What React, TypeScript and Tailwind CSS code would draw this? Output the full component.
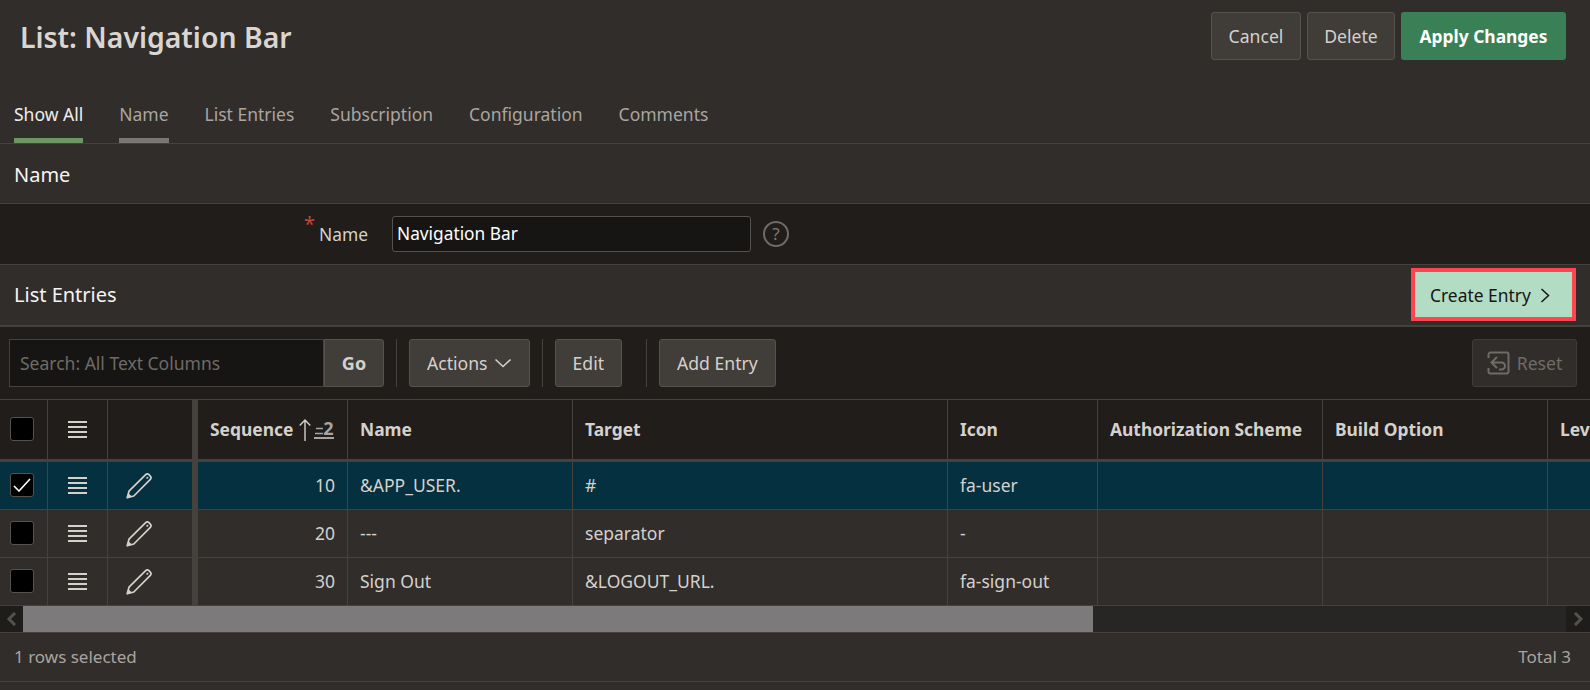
const gridCols = "grid grid-cols-[48px_60px_84px_6px_150px_225px_375px_150px_225px_225px_42px]";

const rows = [
    { seq: "10", name: "&APP_USER.", target: "#", icon: "fa-user", selected: true },
    { seq: "20", name: "---", target: "separator", icon: "-", selected: false },
    { seq: "30", name: "Sign Out", target: "&LOGOUT_URL.", icon: "fa-sign-out", selected: false },
];

function MenuLines() {
    return (
        <svg width="19" height="18" viewBox="0 0 19 18" className="text-[#d4d1cd] mb-[2px]">
            <path d="M0 2h19M0 7h19M0 12h19M0 17h19" stroke="currentColor" strokeWidth="2" fill="none" />
        </svg>
    );
}

function Pencil() {
    return (
        <svg width="26" height="26" viewBox="0 0 26 26" fill="none" className="text-[#d4d1cd]">
            <path d="M1.2 24.8l1.8-6.6L19.4 1.9a2.7 2.7 0 0 1 3.8 0l.9.9a2.7 2.7 0 0 1 0 3.8L7.8 23z" stroke="currentColor" strokeWidth="1.7" strokeLinejoin="round" />
            <path d="M1.2 24.8l1.3-4.6 3.3 3.3z" fill="currentColor" />
            <circle cx="21.3" cy="4.7" r="1" fill="currentColor" />
        </svg>
    );
}

function Check({ checked }: { checked?: boolean }) {
    return (
        <div className="w-6 h-6 mb-[2px] bg-black border border-[#55514d] rounded-[3px] flex items-center justify-center">
            {checked && (
                <svg width="18" height="14" viewBox="0 0 18 14" fill="none">
                    <path d="M1 8l5 5L17 1" stroke="#ffffff" strokeWidth="1.6" />
                </svg>
            )}
        </div>
    );
}

function ToolButton({ label, icon }: { label: string; icon?: boolean }) {
    return (
        <button className="h-12 px-[17px] flex items-center gap-[6px] bg-[#413d39] border border-[#56524e] rounded-[3px] text-[17.6px] text-[#d4d1cd]">
            {label}
            {icon && (
                <svg width="18" height="10" viewBox="0 0 18 10" fill="none">
                    <path d="M1.500 1.500l7.500 7 7.500-7" stroke="currentColor" strokeWidth="1.6" />
                </svg>
            )}
        </button>
    );
}

function Cell({ children, className = "" }: { children?: React.ReactNode; className?: string }) {
    return <div className={`border-r border-[#45413d] flex items-center ${className}`}>{children}</div>;
}

export default function App() {
    return (
        <div className="w-[1590px] h-[690px] overflow-hidden bg-[#312d2a] text-[#d4d1cd] font-['Noto_Sans',sans-serif]">
            {/* Title + tabs */}
            <header className="h-[144px] border-b border-[#45413d] flex flex-col">
                <div className="flex justify-between pt-3 pr-6 pl-5 h-[94px]">
                    <h1 className="text-[28.4px] leading-[50px] font-semibold text-[#d9d6d2]">List: Navigation Bar</h1>
                    <div className="flex gap-[6px] h-12">
                        <button className="w-[90px] bg-[#403c38] border border-[#56524e] rounded-[3px] text-[17.6px]">Cancel</button>
                        <button className="w-[88px] bg-[#403c38] border border-[#56524e] rounded-[3px] text-[17.6px]">Delete</button>
                        <button className="w-[165px] bg-[#3a8057] rounded-[3px] text-[17.4px] font-bold text-white">Apply Changes</button>
                    </div>
                </div>
                <nav className="flex gap-9 pl-[14px] text-[17.5px] text-[#a9a5a0] flex-1">
                    <span className="h-[49px] leading-[40px] border-b-[5px] border-[#6c9764] text-[#f0eeec]">Show All</span>
                    <span className="h-[49px] leading-[40px] border-b-[5px] border-[#7a7673]">Name</span>
                    <span className="leading-[40px]">List Entries</span>
                    <span className="leading-[40px]">Subscription</span>
                    <span className="leading-[40px]">Configuration</span>
                    <span className="leading-[40px]">Comments</span>
                </nav>
            </header>

            {/* Name region */}
            <section className="h-[60px] pt-[3px] border-b border-[#45413d] flex items-center pl-[14px] text-[20px] text-[#f5f4f2]">Name</section>
            <section className="h-[61px] border-b border-[#45413d] bg-[#201d1a] flex items-center">
                <div className="w-[392px] flex justify-end pr-[24px] text-[17.4px] text-[#d4d1cd] items-center">
                    <span className="text-[#c74634] text-[20px] leading-none -mt-[20px] mr-[4px]">*</span>
                    Name
                </div>
                <div className="w-[359px] h-[36px] bg-[#161513] border border-[#55514d] rounded-[3px] flex items-center pl-[4px] text-[17.3px] text-white">Navigation Bar</div>
                <div className="ml-3 w-[26px] h-[26px] rounded-full border-2 border-[#6f6b67] flex items-center justify-center text-[17px] text-[#7d7975]">?</div>
            </section>

            {/* List Entries */}
            <section className="h-[62px] border-b-2 border-[#45413d] flex items-center justify-between pl-[14px] pr-[14px] text-[20px] text-[#f5f4f2]">
                List Entries
                <button className="w-[165px] h-[53px] mb-[2px] pt-[2px] pl-[15px] border-4 border-[#ff454f] bg-[#b3dcc5] flex items-center gap-[9px] text-[17.4px] text-[#161513]">
                    Create Entry
                    <svg width="10" height="15" viewBox="0 0 10 15" fill="none">
                        <path d="M1.500 1l7 6.500-7 6.500" stroke="currentColor" strokeWidth="1.5" />
                    </svg>
                </button>
            </section>

            {/* Toolbar */}
            <div className="h-[73px] bg-[#201d1a] border-b border-[#45413d] flex items-center pl-[9px] pr-[13px]">
                <div className="w-[315px] h-12 bg-[#161513] border border-[#45413d] flex items-center pl-[10px] text-[17.5px] text-[#6f6b67]">Search: All Text Columns</div>
                <button className="w-[60px] h-12 bg-[#413d39] border border-[#56524e] rounded-r-[3px] text-[18px] font-bold">Go</button>
                <div className="w-px h-12 bg-[#45413d] mx-3"></div>
                <ToolButton label="Actions" icon />
                <div className="w-px h-12 bg-[#45413d] mx-3"></div>
                <ToolButton label="Edit" />
                <div className="w-px h-12 bg-[#45413d] ml-6 mr-3"></div>
                <ToolButton label="Add Entry" />
                <button className="ml-auto h-12 w-[105px] bg-[#312d2a] border border-[#3f3b37] rounded-[3px] flex items-center justify-center gap-[7px] text-[17.6px] text-[#6f6b67]">
                    <svg width="23" height="24" viewBox="0 0 23 24" fill="none">
                        <path d="M1.500 7V3.500a2 2 0 0 1 2-2h16a2 2 0 0 1 2 2v17a2 2 0 0 1-2 2h-16a2 2 0 0 1-2-2V17" stroke="currentColor" strokeWidth="2" />
                        <path d="M10 6l-5.500 5.500L10 17M4.500 11.500h10a3.500 3.500 0 0 1 3.500 3.500v0a3.500 3.500 0 0 1-3.500 3.500H12" stroke="currentColor" strokeWidth="2" />
                    </svg>
                    Reset
                </button>
            </div>

            {/* Grid header */}
            <div className={`${gridCols} h-[62px] bg-[#201d1a] border-b-[3px] border-[#45413d] text-[17.4px] font-bold text-[#d4d1cd]`}>
                <Cell className="pl-[10px]"><Check /></Cell>
                <Cell className="justify-center"><MenuLines /></Cell>
                <div className="flex"></div>
                <div className="bg-[#45413d]"></div>
                <Cell className="pl-[12px]">
                    Sequence
                    <svg width="12" height="22" viewBox="0 0 12 22" fill="none" className="ml-[6px]">
                        <path d="M6 22V1M.7 6.500L6 1l5.300 5.500" stroke="currentColor" strokeWidth="1.4" />
                    </svg>
                    <span className="ml-[3px] flex items-end h-[18px] border-b-2 border-[#a9a5a0] text-[#a9a5a0] leading-none">
                        <svg width="9" height="9" viewBox="0 0 9 9" fill="none" className="mb-[1px]">
                            <path d="M2 1.500h7M1 6.500h8" stroke="currentColor" strokeWidth="1.6" />
                        </svg>
                        <span className="text-[18px] w-[11px]">2</span>
                    </span>
                </Cell>
                <Cell className="pl-3">Name</Cell>
                <Cell className="pl-3">Target</Cell>
                <Cell className="pl-3">Icon</Cell>
                <Cell className="pl-3">Authorization Scheme</Cell>
                <Cell className="pl-3">Build Option</Cell>
                <div className="pl-3 flex items-center">Lev</div>
            </div>

            {/* Grid rows */}
            {rows.map((row) => (
                <div key={row.seq} className={`${gridCols} h-[48px] border-b border-[#45413d] text-[17.5px] ${row.selected ? "bg-[#04303f]" : ""}`}>
                    <Cell className="pl-[10px]"><Check checked={row.selected} /></Cell>
                    <Cell className="justify-center"><MenuLines /></Cell>
                    <div className="flex items-center pl-[18px]"><Pencil /></div>
                    <div className="bg-[#45413d]"></div>
                    <Cell className="justify-end pr-3">{row.seq}</Cell>
                    <Cell className="pl-3">{row.name}</Cell>
                    <Cell className="pl-3">{row.target}</Cell>
                    <Cell className="pl-3">{row.icon}</Cell>
                    <Cell />
                    <Cell />
                    <div></div>
                </div>
            ))}

            {/* Scrollbar */}
            <div className="h-[27px] bg-[#282624] border-b border-[#45413d] flex">
                <div className="w-[23px] bg-[#1f1d1b] flex items-center justify-center text-[#55514d]">
                    <svg width="12" height="14" viewBox="0 0 12 14" fill="none"><path d="M9 1L3 7l6 6" stroke="currentColor" strokeWidth="3" /></svg>
                </div>
                <div className="w-[1070px] bg-[#7c7a7a]"></div>
                <div className="ml-auto w-[24px] bg-[#1f1d1b] flex items-center justify-center text-[#55514d]">
                    <svg width="12" height="14" viewBox="0 0 12 14" fill="none"><path d="M3 1l6 6-6 6" stroke="currentColor" strokeWidth="3" /></svg>
                </div>
            </div>

            {/* Footer */}
            <div className="h-[49px] border-b border-[#45413d] flex items-center justify-between pl-[14px] pr-[19px] text-[17px] text-[#a9a5a0]">
                <span>1 rows selected</span>
                <span>Total 3</span>
            </div>
        </div>
    );
}
